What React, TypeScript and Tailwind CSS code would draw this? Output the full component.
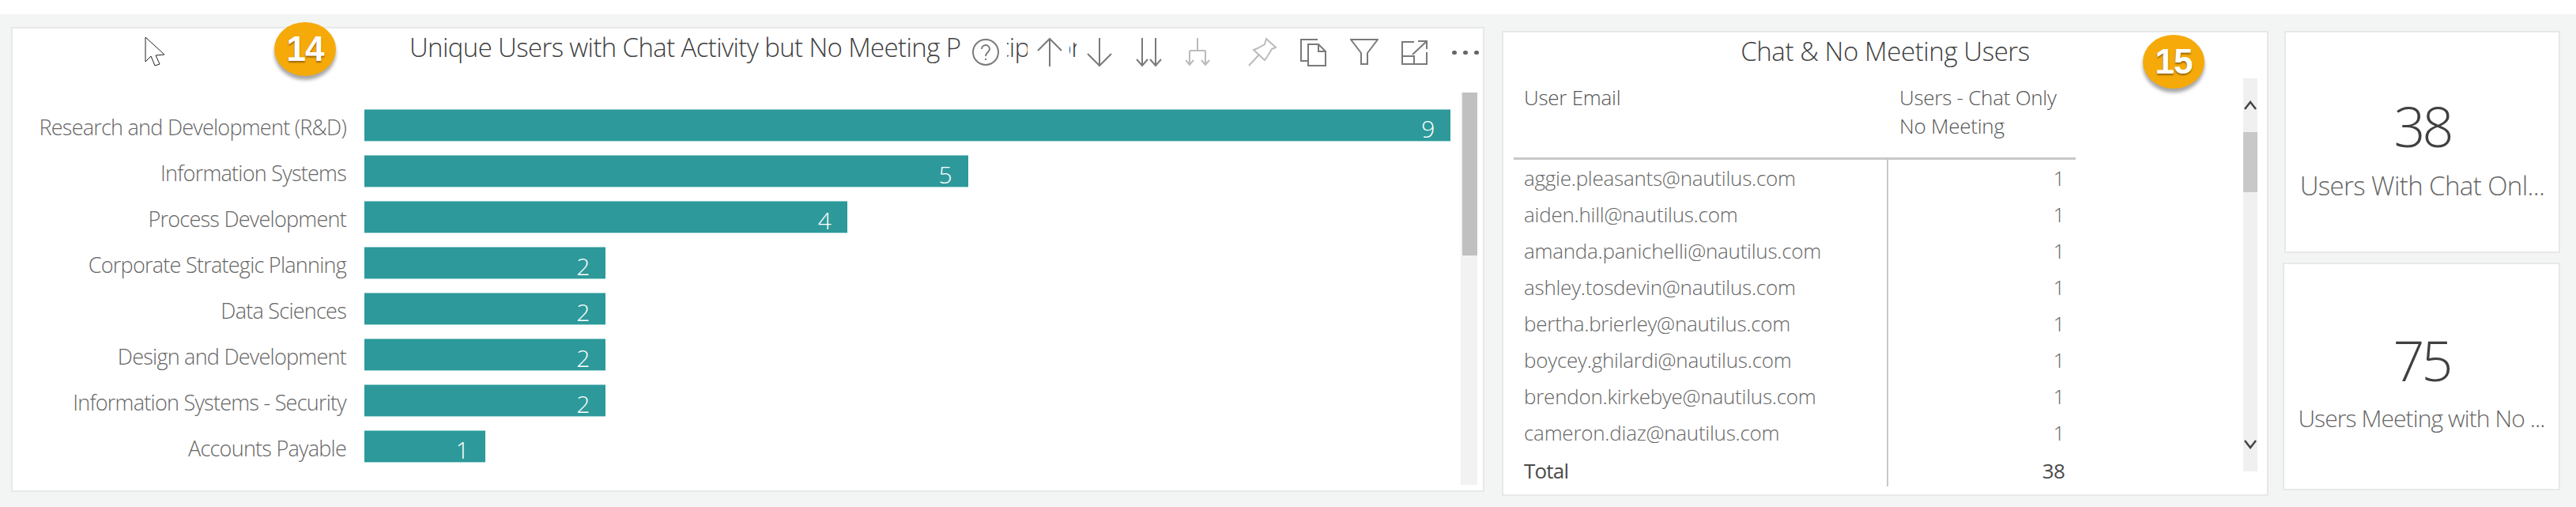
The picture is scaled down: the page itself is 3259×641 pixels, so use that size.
import React from "react";

const departments = [
  { name: "Research and Development (R&D)", users: 9 },
  { name: "Information Systems", users: 5 },
  { name: "Process Development", users: 4 },
  { name: "Corporate Strategic Planning", users: 2 },
  { name: "Data Sciences", users: 2 },
  { name: "Design and Development", users: 2 },
  { name: "Information Systems - Security", users: 2 },
  { name: "Accounts Payable", users: 1 },
];

const emails = [
  "aggie.pleasants@nautilus.com",
  "aiden.hill@nautilus.com",
  "amanda.panichelli@nautilus.com",
  "ashley.tosdevin@nautilus.com",
  "bertha.brierley@nautilus.com",
  "boycey.ghilardi@nautilus.com",
  "brendon.kirkebye@nautilus.com",
  "cameron.diaz@nautilus.com",
];

const Badge = ({ n, className }: { n: string; className: string }) => (
  <div
    className={`absolute flex items-center justify-center w-[78px] h-[68px] rounded-[50%] bg-[#f6aa0a] shadow-[0_5px_4px_rgba(0,0,0,0.35)] text-white text-[44px] font-bold font-['Liberation_Sans',sans-serif] tracking-[-1px] [text-shadow:0_2px_2px_rgba(90,60,0,0.6)] ${className}`}
  >
    {n}
  </div>
);

const ToolIcon = ({ w, children, className = "" }: { w: number; children: React.ReactNode; className?: string }) => (
  <svg
    width={w}
    height="38"
    viewBox={`0 0 ${w} 38`}
    fill="none"
    stroke="#7a7a7a"
    strokeWidth="2"
    className={`shrink-0 ${className}`}
  >
    {children}
  </svg>
);

const ChartHeaderIcons = () => (
  <div className="absolute left-[1200px] top-[10px] flex h-[40px] items-center">
    <div className="flex h-[40px] w-[58px] items-center justify-end bg-white pr-[10px]">
      <svg width="34" height="34" viewBox="0 0 34 34" fill="none" stroke="#7a7a7a" strokeWidth="2">
        <ellipse cx="17" cy="17" rx="16" ry="16" />
        <path d="M12 13c0-3 2.500-5 5-5s5 2 5 5c0 4-5 4-5 9" />
        <path d="M17 25v2" />
      </svg>
    </div>
    <div className="w-[26px]" />
    <div className="flex h-[40px] w-[53px] items-center bg-white pl-[11px]">
      <ToolIcon w={34}>
        <path d="M17 37V2M2 17 17 2l15 15" />
      </ToolIcon>
    </div>
    <div className="w-[9px]" />
    <div className="flex h-[40px] w-[518px] items-center bg-white">
      <ToolIcon w={34} className="ml-[12px]">
        <path d="M17 1v35M2 21l15 15 15-15" />
      </ToolIcon>
      <ToolIcon w={33} className="ml-[29px]">
        <path d="M8 1v35M1 28l7 8 7-8M25 1v35M18 28l7 8 7-8" />
      </ToolIcon>
      <ToolIcon w={31} className="ml-[30px] opacity-50">
        <path d="M15 1v16M5 17h20M5 17v18M25 17v18M0 29l5 6 5-6M20 29l5 6 5-6" />
      </ToolIcon>
      <ToolIcon w={36} className="ml-[48px] opacity-50">
        <path d="M1 36 14 22M23 2l12 11-5 2-6 10-3 4-14-13 5-2 9-5z" />
      </ToolIcon>
      <ToolIcon w={33} className="ml-[30px]">
        <path d="M22 3H1v27h9M10 9h13l9 9v18H10zM23 9v9h9" />
      </ToolIcon>
      <ToolIcon w={36} className="ml-[30px]">
        <path d="M1 3h34L22 20v14h-8V20z" />
      </ToolIcon>
      <ToolIcon w={33} className="ml-[29px]">
        <path d="M16 6H1v28h31V19M1 24h15v10M14 22 31 6M21 5h11v10" />
      </ToolIcon>
      <div className="ml-[31px] flex gap-[8px]">
        <div className="h-[5px] w-[6px] rounded-full bg-[#666666]" />
        <div className="h-[5px] w-[6px] rounded-full bg-[#666666]" />
        <div className="h-[5px] w-[6px] rounded-full bg-[#666666]" />
      </div>
    </div>
  </div>
);

const BarChartPanel = () => (
  <div className="relative ml-[14px] mt-[16px] h-[588px] w-[1864px] shrink-0 overflow-hidden border-2 border-[#e8e8e8] bg-white">
    <div className="h-[81px] overflow-hidden whitespace-nowrap pl-[502px] pt-[2px] text-[33px] leading-[44px] tracking-[-0.63px] text-[#404040]">
      Unique Users with Chat Activity but No Meeting Participation
    </div>
    <svg width="26" height="38" viewBox="0 0 26 38" className="absolute left-[167px] top-[10px]" fill="#ffffff" stroke="#222222" strokeWidth="1">
      <path d="M1 1v31l7-7 5 12 6-2-5-11 11-1z" />
    </svg>
    <ChartHeaderIcons />
    <div className="flex h-[496px]">
      <div className="flex w-[1832px] flex-col gap-[17px] pt-[21px]">
        {departments.map((d) => (
          <div key={d.name} className="flex h-[41px] items-center gap-[23px]">
            <div className="w-[422px] whitespace-nowrap pt-[5px] text-right text-[27px] tracking-[-0.75px] text-[#666666]">{d.name}</div>
            <div
              className="flex h-[41px] items-center justify-end border-y border-t-[#8cc9c9] border-b-[#a8d8d8] bg-[#2d999a] pr-[20px] pt-[8px] text-[30px] text-white"
              style={{ width: d.users * 152.7 }}
            >
              {d.users}
            </div>
          </div>
        ))}
      </div>
      <div className="w-[21px] shrink-0 bg-[#f2f2f2] pl-[2px]">
        <div className="h-[206px] bg-[#c0c0c0]" />
      </div>
    </div>
  </div>
);

const TablePanel = () => (
  <div className="relative ml-[22px] mt-[21px] h-[588px] w-[970px] shrink-0 border-2 border-[#e8e8e8] bg-white">
    <div className="h-[58px] pt-[2px] text-center text-[33px] leading-[44px] tracking-[-0.4px] text-[#404040]">
      Chat &amp; No Meeting Users
    </div>
    <div className="flex items-start pl-[13px]">
      <div className="w-[711px] shrink-0 text-[26px] tracking-[-0.25px] text-[#666666]">
        <div className="flex h-[103px] border-b-[3px] border-[#c8c8c8] leading-[36px] text-[#555555]">
          <div className="w-[472px] pl-[13px] pt-[6px]">User Email</div>
          <div className="pl-[16px] pt-[6px]">
            Users - Chat Only
            <br />
            No Meeting
          </div>
        </div>
        {emails.map((e) => (
          <div key={e} className="flex h-[46px] items-center">
            <div className="w-[472px] whitespace-nowrap pl-[13px]">{e}</div>
            <div className="flex h-full w-[239px] items-center justify-end border-l-2 border-[#c8c8c8] pr-[14px]">1</div>
          </div>
        ))}
        <div className="flex h-[45px] items-center font-normal tracking-[-0.8px] text-[#4a4a4a]">
          <div className="w-[472px] pl-[13px] pt-[6px]">Total</div>
          <div className="flex h-full w-[239px] items-center justify-end border-l-2 border-[#c8c8c8] pr-[14px] pt-[6px]">38</div>
        </div>
      </div>
      <div className="ml-[212px] flex h-[497px] w-[18px] shrink-0 flex-col items-center bg-[#f0f0f0] pt-[28px]">
        <svg width="16" height="12" viewBox="0 0 16 12" fill="none" stroke="#444444" strokeWidth="2.500">
          <path d="M1 11 8 2l7 9" />
        </svg>
        <div className="mt-[28px] h-[76px] w-full shrink-0 bg-[#c8c8c8]" />
        <svg width="16" height="12" viewBox="0 0 16 12" fill="none" stroke="#444444" strokeWidth="2.500" className="mt-[313px]">
          <path d="M1 1l7 9 7-9" />
        </svg>
      </div>
    </div>
    <Badge n="15" className="left-[809px] top-[3px]" />
  </div>
);

const KpiCard = ({ value, label, className, labelClass }: { value: string; label: string; className: string; labelClass: string }) => (
  <div className={`flex flex-col items-center border-2 border-[#e8e8e8] bg-white ${className}`}>
    <div className="text-[70px] leading-[84px] tracking-[-4px] text-[#404040]">{value}</div>
    <div className={`whitespace-nowrap leading-[44px] text-[#666666] ${labelClass}`}>{label}</div>
  </div>
);

export default function App() {
  return (
    <div className="relative h-[641px] w-[3259px] overflow-hidden bg-white font-['Open_Sans',sans-serif] font-light">
      <div className="h-[18px]" />
      <div className="flex h-[623px] items-start bg-[#f3f5f4]">
        <BarChartPanel />
        <TablePanel />
        <div className="ml-[20px] flex w-[349px] shrink-0 flex-col">
          <KpiCard
            value="38"
            label="Users With Chat Onl..."
            className="mt-[21px] h-[281px] pt-[76px]"
            labelClass="mt-[12px] text-[33px] tracking-[-0.6px]"
          />
          <KpiCard
            value="75"
            label="Users Meeting with No ..."
            className="-ml-[2px] mt-[12px] h-[288px] pt-[79px]"
            labelClass="mt-[10px] text-[30px] tracking-[-0.9px]"
          />
        </div>
      </div>
      <Badge n="14" className="left-[347px] top-[28px]" />
    </div>
  );
}
